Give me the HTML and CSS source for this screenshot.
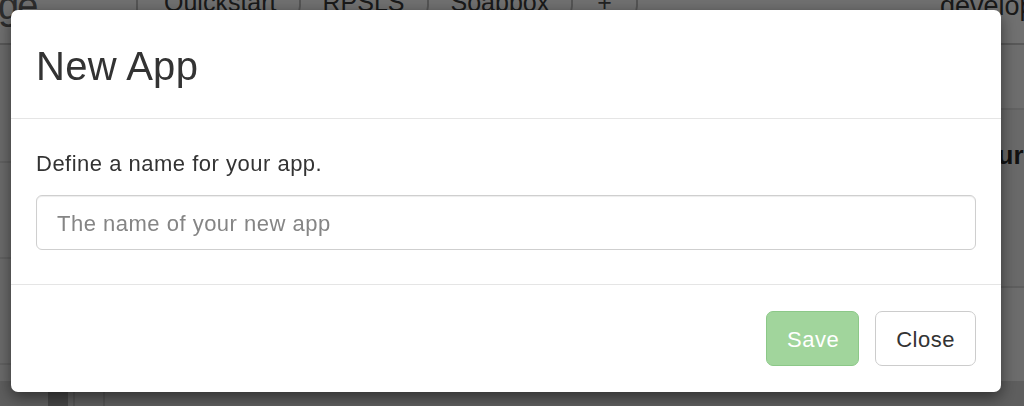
FILE: index.html
```html
<!DOCTYPE html>
<html lang="en">
<head>
<meta charset="utf-8">
<title>New App</title>
<link rel="stylesheet" href="styles.css">
</head>
<body>
<div class="page">
  <header class="nav">
    <div class="brand">ge<sup class="tm">TM</sup></div>
    <ul class="tabs">
      <li class="tab">Quickstart</li>
      <li class="tab">RPSLS</li>
      <li class="tab">Soapbox</li>
      <li class="tab tab-add">+</li>
    </ul>
    <div class="user">developer</div>
  </header>
  <div class="main">
    <aside class="side">
      <div class="side-row r1"></div>
      <div class="side-row r2"></div>
      <div class="side-row r3"></div>
      <div class="side-row r4"></div>
    </aside>
    <section class="content">
      <div class="panel-top"></div>
      <div class="panel">
        <h2 class="panel-title">Your apps will be listed here. Create your i</h2>
      </div>
    </section>
  </div>
  <div class="foot">
    <span class="bar b1"></span><span class="bar b2"></span><span class="bar b3"></span>
  </div>
</div>

<div class="backdrop">
  <div class="modal">
    <div class="modal-header">
      <h1 class="modal-title">New App</h1>
    </div>
    <div class="modal-body">
      <label class="label" for="appname">Define a name for your app.</label>
      <input class="input" id="appname" type="text" placeholder="The name of your new app">
    </div>
    <div class="modal-footer">
      <button class="btn btn-save" disabled>Save</button>
      <button class="btn btn-close">Close</button>
    </div>
  </div>
</div>
</body>
</html>
```

FILE: styles.css
```css
* { box-sizing: border-box; }

html, body {
  margin: 0;
  padding: 0;
  width: 1024px;
  height: 406px;
  overflow: hidden;
}

body {
  font-family: "Liberation Sans", Arial, sans-serif;
  color: #333;
  background: #d4d4d4;
}

/* ---------- underlying page (scrolled a little) ---------- */
.page {
  margin-top: -14px;
  white-space: nowrap;
}

.nav {
  display: flex;
  align-items: flex-end;
  height: 59px;
  background: #e0e0e0;
  border-bottom: 2px solid #b0b0b0;
}

.brand {
  width: 140px;
  align-self: flex-start;
  font-size: 38px;
  font-weight: 300;
  color: #5a5a5a;
  line-height: 40px;
  letter-spacing: -2px;
  border-right: 2px solid #aaa;
  height: 26px;
  margin-left: -2px;
}
.tm { font-size: 10px; vertical-align: top; margin-left: 12px; position: relative; top: 14px; letter-spacing: 0; }

.tabs {
  list-style: none;
  margin: 0;
  padding: 0 0 0 6px;
  display: flex;
  align-self: flex-start;
}
.tab {
  font-size: 25px;
  color: #333;
  line-height: 24px;
  padding: 4px 22px 0;
  border-right: 2px solid #a8a8a8;
  border-bottom-right-radius: 10px;
  height: 30px;
}
.tab:first-child { padding-left: 20px; }
.tab-add { padding: 4px 24px 0; color: #444; }

.user {
  margin-left: auto;
  align-self: flex-start;
  font-size: 27px;
  line-height: 40px;
  margin-right: -40px;
  color: #333;
  width: 124px;
  overflow: hidden;
}

.main {
  display: flex;
  height: 336px;
}

.side {
  width: 11px;
  display: flex;
  flex-direction: column;
  background: #d6d6d6;
}
.side-row { border-bottom: 2px solid #c2c2c2; }
.r1 { height: 118px; }
.r2 { height: 96px; }
.r3 { height: 106px; }
.r4 { flex: 1; border-bottom: 0; }

.content {
  flex: 1;
  display: flex;
  flex-direction: column;
  background: #d8d8d8;
}
.panel-top { height: 65px; border-bottom: 2px solid #c4c4c4; background: #dadada; }
.panel {
  height: 178px;
  border-bottom: 2px solid #bdbdbd;
  background: #d2d2d2;
  display: flex;
  justify-content: flex-end;
  overflow: hidden;
}
.panel-title {
  margin: 30px -14px 0 0;
  font-size: 26px;
  font-weight: 700;
  color: #222;
}

.foot {
  display: flex;
  height: 30px;
  background: #bcbcbc;
}
.bar { display: block; height: 100%; }
.b1 { width: 48px; }
.b2 { width: 20px; background: #8a8a8a; }
.b3 { width: 32px; border-left: 2px solid #a6a6a6; border-right: 2px solid #a6a6a6; margin-left: 5px; }

/* ---------- modal ---------- */
.backdrop {
  position: fixed;
  inset: 0;
  background: rgba(0, 0, 0, 0.5);
  padding: 10px 0 0 11px;
}

.modal {
  width: 990px;
  height: 382px;
  background: #fff;
  border-radius: 7px;
  box-shadow: 0 5px 15px rgba(0, 0, 0, 0.5);
  display: flex;
  flex-direction: column;
}

.modal-header {
  padding: 34px 25px 0;
  height: 109px;
  border-bottom: 1px solid #e5e5e5;
}
.modal-title {
  margin: 0;
  font-size: 40px;
  font-weight: 400;
  line-height: 44px;
  letter-spacing: 0.3px;
  color: #333;
}

.modal-body {
  padding: 30px 25px 0;
  height: 166px;
  border-bottom: 1px solid #e5e5e5;
  display: flex;
  flex-direction: column;
}
.label {
  font-size: 22px;
  letter-spacing: 0.5px;
  line-height: 30px;
  margin-bottom: 16px;
  color: #333;
}
.input {
  width: 940px;
  height: 55px;
  padding: 2px 20px 0;
  font-family: "Liberation Sans", Arial, sans-serif;
  font-size: 22px;
  letter-spacing: 0.5px;
  color: #555;
  border: 1px solid #cfcfcf;
  border-radius: 6px;
  box-shadow: inset 0 1px 1px rgba(0, 0, 0, 0.075);
  outline: none;
}
.input::placeholder { color: #858585; }

.modal-footer {
  flex: 1;
  display: flex;
  justify-content: flex-end;
  align-items: flex-start;
  gap: 16px;
  padding: 26px 25px 0;
}

.btn {
  height: 55px;
  padding: 3px 20px 0;
  font-family: "Liberation Sans", Arial, sans-serif;
  font-size: 22px;
  letter-spacing: 0.5px;
  border-radius: 7px;
  border: 1px solid;
}
.btn-save {
  width: 93px;
  background: #a1d59c;
  border-color: #8cc888;
  color: #fff;
}
.btn-close {
  width: 101px;
  background: #fff;
  border-color: #cccccc;
  color: #333;
}
```
